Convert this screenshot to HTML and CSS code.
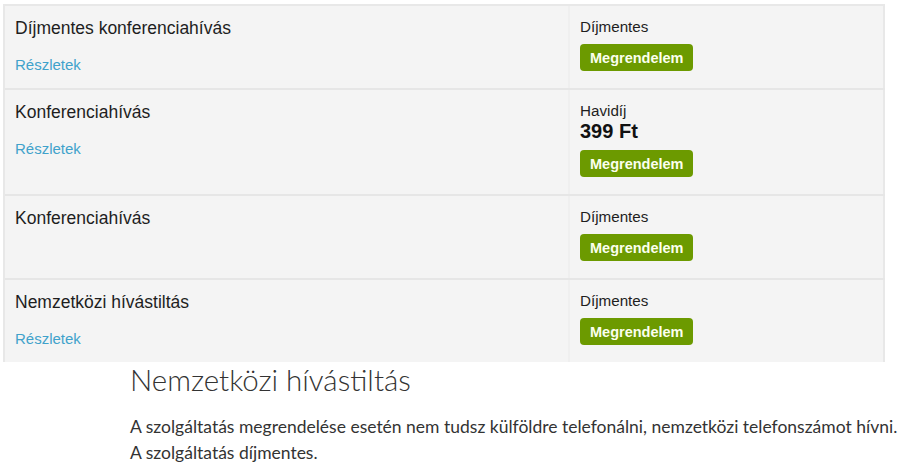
FILE: index.html
```html
<!DOCTYPE html>
<html lang="hu">
<head>
<meta charset="utf-8">
<link rel="stylesheet" href="styles.css">
</head>
<body>
<div class="page">
  <div class="table">
    <div class="row">
      <div class="cell name">
        <div class="title">Díjmentes konferenciahívás</div>
        <a class="link" href="#">Részletek</a>
      </div>
      <div class="cell price">
        <div class="label">Díjmentes</div>
        <button class="btn">Megrendelem</button>
      </div>
    </div>
    <div class="row">
      <div class="cell name">
        <div class="title">Konferenciahívás</div>
        <a class="link" href="#">Részletek</a>
      </div>
      <div class="cell price">
        <div class="label">Havidíj</div>
        <div class="amount">399 Ft</div>
        <button class="btn">Megrendelem</button>
      </div>
    </div>
    <div class="row">
      <div class="cell name">
        <div class="title">Konferenciahívás</div>
      </div>
      <div class="cell price">
        <div class="label">Díjmentes</div>
        <button class="btn">Megrendelem</button>
      </div>
    </div>
    <div class="row">
      <div class="cell name">
        <div class="title">Nemzetközi hívástiltás</div>
        <a class="link" href="#">Részletek</a>
      </div>
      <div class="cell price">
        <div class="label">Díjmentes</div>
        <button class="btn">Megrendelem</button>
      </div>
    </div>
  </div>
  <div class="details">
    <h2 class="heading">Nemzetközi hívástiltás</h2>
    <p class="text">A szolgáltatás megrendelése esetén nem tudsz külföldre telefonálni, nemzetközi telefonszámot hívni.<br>A szolgáltatás díjmentes.</p>
  </div>
</div>
</body>
</html>
```

FILE: styles.css
```css
html, body {
  margin: 0;
  padding: 0;
  background: #fff;
}
.page {
  padding: 4px 0 0 3px;
  font-family: "Liberation Sans", Arial, sans-serif;
  color: #1e1e1e;
}
.table {
  width: 882px;
  border-top: 2px solid #e8e8e8;
  border-left: 2px solid #e8e8e8;
  box-sizing: border-box;
}
.row {
  display: grid;
  grid-template-columns: 565px 1fr;
  border-bottom: 2px solid #e6e6e6;
}
.row:last-child {
  border-bottom: none;
}
.cell {
  background: #f4f4f4;
  box-sizing: border-box;
}
.name {
  padding: 12px 10px 0 10px;
  border-right: 2px solid #efefef;
}
.price {
  padding: 12px 10px 17px 10px;
  border-right: 2px solid #e8e8e8;
  display: flex;
  flex-direction: column;
  align-items: flex-start;
}
.title {
  font-size: 17.5px;
  line-height: 20px;
}
.link {
  display: block;
  margin-top: 18px;
  font-size: 15px;
  line-height: 18px;
  color: #3fa2cb;
  text-decoration: none;
}
.label {
  font-size: 15.2px;
  line-height: 18px;
}
.amount {
  font-size: 20px;
  line-height: 22px;
  font-weight: bold;
  color: #111;
}
.btn {
  margin-top: 8px;
  height: 27px;
  padding: 0 10px;
  border: none;
  border-radius: 4px;
  background: #6c9a00;
  color: #fbffee;
  font-family: "Liberation Sans", Arial, sans-serif;
  font-size: 14.5px;
  font-weight: bold;
  cursor: pointer;
}
.details {
  padding-left: 127px;
}
.heading {
  margin: 0;
  padding-top: 0;
  font-family: Lato, "Open Sans", sans-serif;
  font-weight: 300;
  font-size: 29.5px;
  line-height: 35px;
  color: #333;
}
.text {
  margin: 17px 0 0 0;
  font-family: Lato, "Open Sans", sans-serif;
  font-size: 17.5px;
  line-height: 26px;
  color: #333;
}
```
